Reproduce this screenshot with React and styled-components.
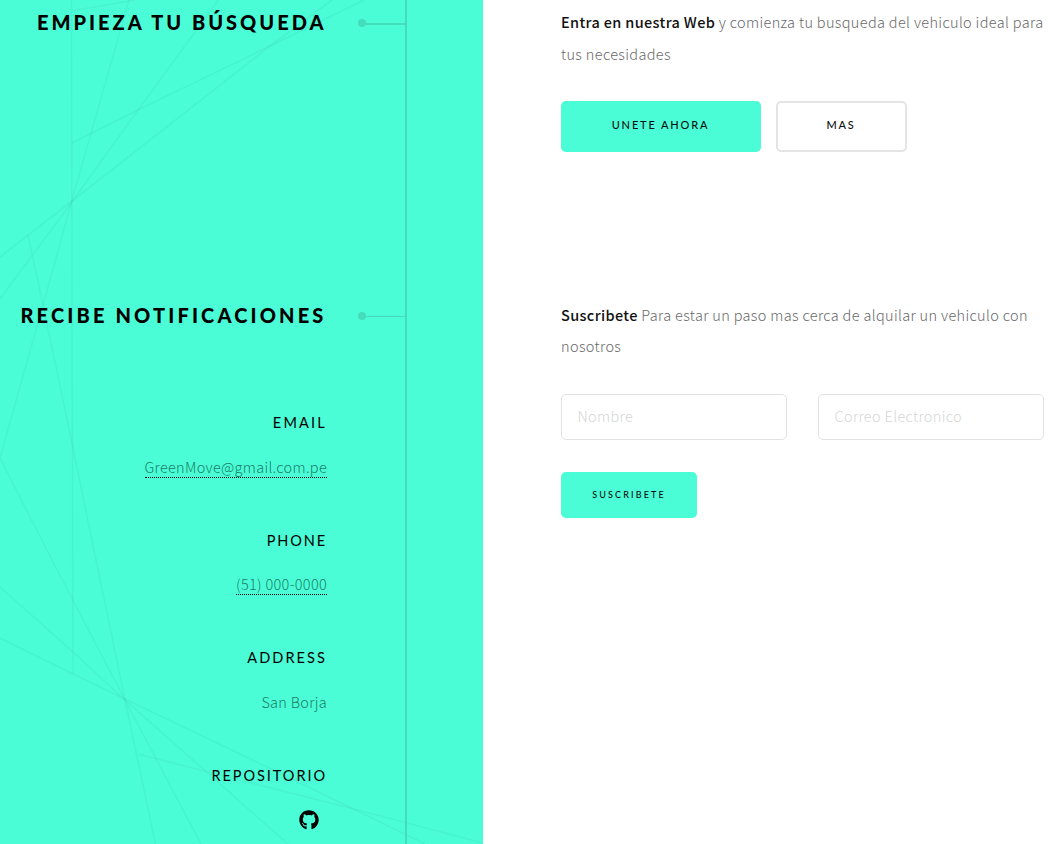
import React from "react";
import styled, { createGlobalStyle } from "styled-components";
import { FaGithub } from "react-icons/fa";

const accent = "#4afdd6";
const rule = "#45dcbb";
const body = `"Noto Sans CJK JP", "Noto Sans", sans-serif`;
const display = `Lato, "Liberation Sans", sans-serif`;

const GlobalStyle = createGlobalStyle`
  *, *::before, *::after { box-sizing: border-box; }
  body {
    margin: 0;
    background: #fff;
    color: #696969;
    font: 300 14.5px/32px ${body};
    letter-spacing: 0.35px;
    overflow: hidden;
  }
`;

const Page = styled.main`
  position: relative;
  height: 844px;
  overflow: hidden;
`;

const Backdrop = styled.svg`
  position: absolute;
  inset: 0 auto 0 0;
  width: 483px;
  height: 844px;
  background: ${accent};
  fill: none;
  stroke: rgba(60, 130, 140, 0.07);
  stroke-width: 1.6;
`;

const Section = styled.section`
  position: relative;
  display: grid;
  grid-template-columns: 407px 1fr;
  height: ${(p) => p.$height}px;
`;

const Rail = styled.header`
  border-right: 2px solid ${rule};
  padding-top: 7px;
`;

const TitleRow = styled.div`
  display: flex;
  align-items: center;
  justify-content: flex-end;
  height: 32px;
`;

const Title = styled.h2`
  margin: 0 31.5px 2px 0;
  color: #000;
  font: 900 20px/32px ${display};
  letter-spacing: ${(p) => p.$tracking}px;
  white-space: nowrap;
`;

const Dot = styled.span`
  width: 8px;
  height: 8px;
  border-radius: 50%;
  background: ${rule};
`;

const Connector = styled.span`
  width: 39px;
  height: ${(p) => p.$weight}px;
  margin-top: ${(p) => p.$weight}px;
  background: ${rule};
`;

const Content = styled.div`
  padding: 6px 14px 0 154px;
`;

const Text = styled.p`
  margin: 0;
  height: 65px;
  line-height: ${(p) => p.$leading}px;
  strong {
    color: #111;
    font-weight: 500;
  }
`;

const ButtonRow = styled.div`
  display: flex;
  gap: 15px;
  margin-top: ${(p) => p.$top}px;
`;

const Button = styled.button`
  width: ${(p) => p.$width}px;
  height: ${(p) => (p.$small ? 46 : 51)}px;
  padding: ${(p) => (p.$small ? "0 0 1px" : "0 1px 4px 0")};
  border: ${(p) => (p.$outline ? "2px solid #e4e4e4" : "0")};
  border-radius: 5px;
  background: ${(p) => (p.$outline ? "#fff" : accent)};
  color: #111;
  font: 500 ${(p) => (p.$small ? 9 : 11)}px ${display};
  letter-spacing: ${(p) => p.$tracking}px;
`;

const Fields = styled.form`
  display: grid;
  grid-template-columns: 226px 226px;
  gap: 31px;
  margin-top: 30px;
`;

const Input = styled.input`
  height: 46px;
  min-width: 0;
  padding: 0 15.5px 3px;
  border: 1px solid #e2e2e2;
  border-radius: 5px;
  background: #fff;
  font: 300 14.5px ${body};
  letter-spacing: 0.35px;
  &::placeholder {
    color: #d6d6d6;
    opacity: 1;
  }
`;

const Contacts = styled.dl`
  margin: 75px 78px 0 0;
  text-align: right;
`;

const Contact = styled.div`
  height: 117.5px;
`;

const Label = styled.dt`
  color: #000;
  font: 400 14.5px/32px ${display};
  letter-spacing: ${(p) => p.$tracking}px;
`;

const Value = styled.dd`
  display: flex;
  justify-content: flex-end;
  margin: 18.6px 0 0;
  color: #1b7f68;
  line-height: 17px;
  letter-spacing: 0.3px;
`;

const Link = styled.a`
  height: 20px;
  border-bottom: 1px dotted #000;
`;

const RepoLink = styled.a`
  display: flex;
  justify-content: flex-end;
  margin: 18px 8px 0 0;
  color: #000;
`;

const LINES = [
  "M71.5 0L71.8 200L73 674",
  "M71 11L135 0",
  "M129 0L72 200L50 280L0 458L52 560L125 700L201 844",
  "M218.500 0L138 110L72 202L14 280L0 299",
  "M332 0L270 46L72 201L0 257",
  "M72 143L138 110L270 46L364 0",
  "M28 235L43 305L73 448L96 560L125 700L155.500 844",
  "M0 587L73 652L125 700L288 844",
  "M0 638L73 674L125 699L290 778L425 844",
  "M138 754L208 772L354 809L483 843",
];

export default function App() {
  return (
    <Page>
      <GlobalStyle />
      <Backdrop viewBox="0 0 483 844" aria-hidden="true">
        {LINES.map((d) => (
          <path key={d} d={d} />
        ))}
      </Backdrop>

      <Section $height={293}>
        <Rail>
          <TitleRow>
            <Title $tracking={3}>EMPIEZA TU BÚSQUEDA</Title>
            <Dot />
            <Connector $weight={2} />
          </TitleRow>
        </Rail>
        <Content>
          <Text $leading={32}>
            <strong>Entra en nuestra Web</strong> y comienza tu busqueda del vehiculo ideal para
            tus necesidades
          </Text>
          <ButtonRow $top={30}>
            <Button $width={200} $tracking={1.85}>UNETE AHORA</Button>
            <Button $width={131} $tracking={1.8} $outline>MAS</Button>
          </ButtonRow>
        </Content>
      </Section>

      <Section $height={551}>
        <Rail>
          <TitleRow>
            <Title $tracking={3.15}>RECIBE NOTIFICACIONES</Title>
            <Dot />
            <Connector $weight={1} />
          </TitleRow>
          <Contacts>
            <Contact>
              <Label $tracking={2.2}>EMAIL</Label>
              <Value><Link>GreenMove@gmail.com.pe</Link></Value>
            </Contact>
            <Contact>
              <Label $tracking={1.9}>PHONE</Label>
              <Value><Link>(51) 000-0000</Link></Value>
            </Contact>
            <Contact>
              <Label $tracking={2.1}>ADDRESS</Label>
              <Value>San Borja</Value>
            </Contact>
            <Contact>
              <Label $tracking={1.95}>REPOSITORIO</Label>
              <RepoLink aria-label="GitHub"><FaGithub size={20} /></RepoLink>
            </Contact>
          </Contacts>
        </Rail>
        <Content>
          <Text $leading={31.4}>
            <strong>Suscribete</strong> Para estar un paso mas cerca de alquilar un vehiculo con
            nosotros
          </Text>
          <Fields>
            <Input placeholder="Nombre" />
            <Input placeholder="Correo Electronico" />
          </Fields>
          <ButtonRow $top={32}>
            <Button $width={136} $tracking={2.15} $small>SUSCRIBETE</Button>
          </ButtonRow>
        </Content>
      </Section>
    </Page>
  );
}
